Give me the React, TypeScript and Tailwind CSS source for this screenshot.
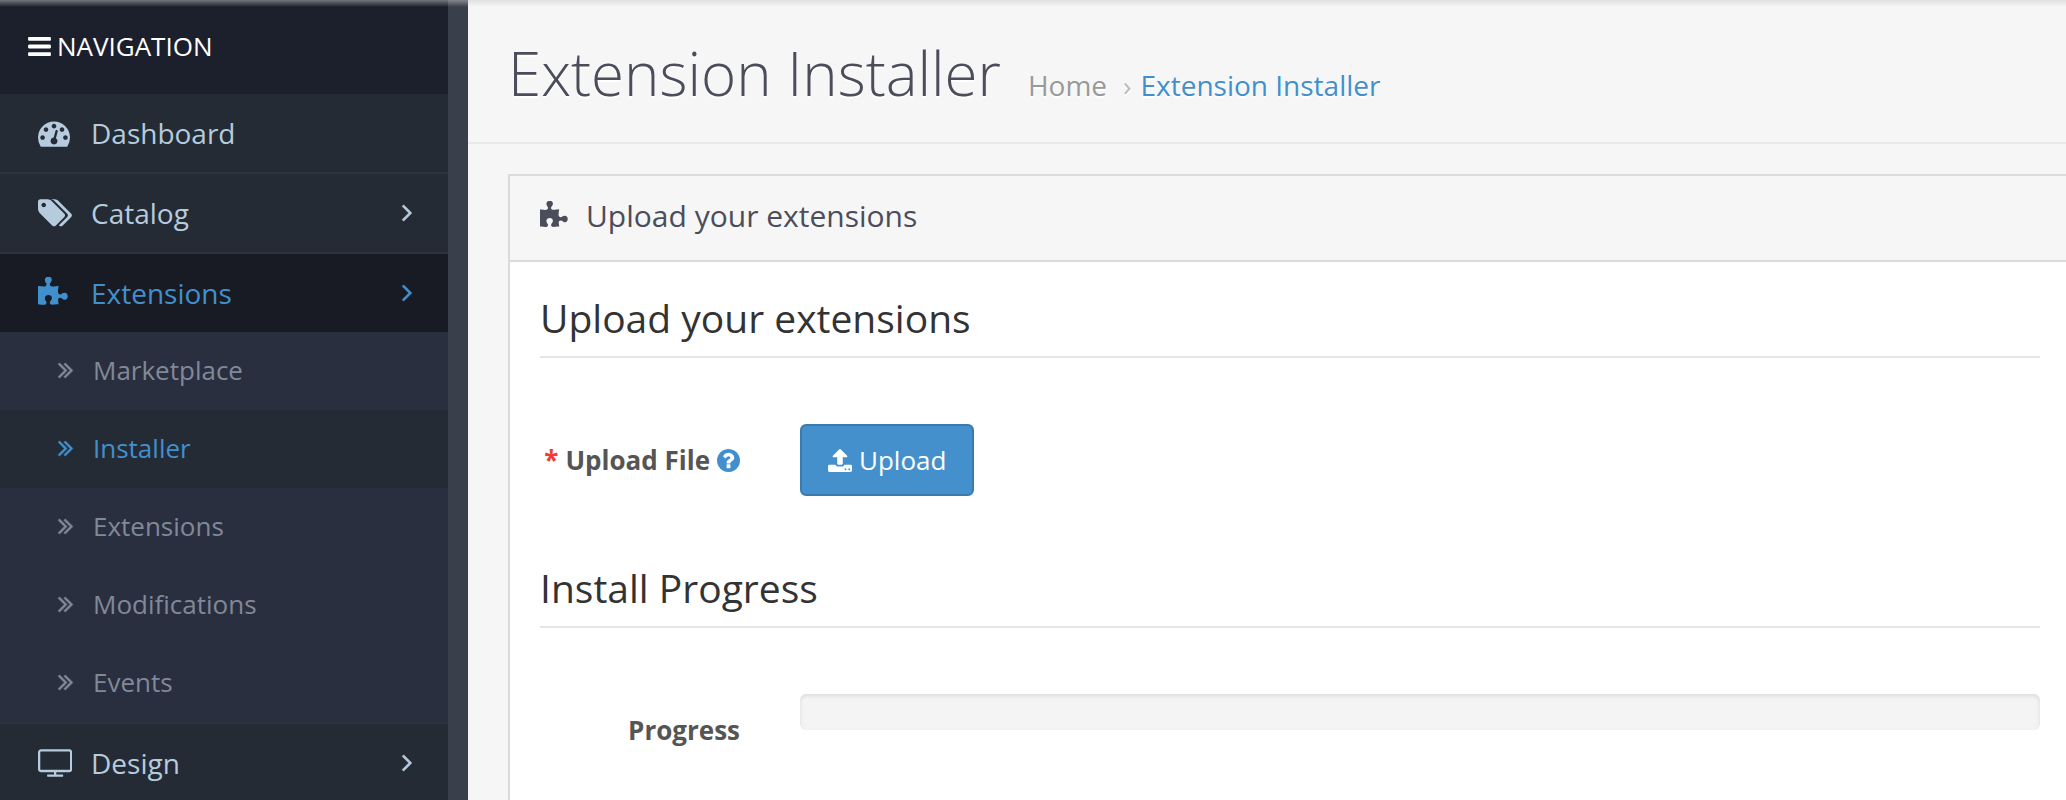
import React from "react";

type Glyph = { box: string; d: string };

const glyphs = {
  bars: {
    box: "128 256 1536 1280",
    d: "M1664 1344v128q0 26-19 45t-45 19h-1408q-26 0-45-19t-19-45v-128q0-26 19-45t45-19h1408q26 0 45 19t19 45zm0-512v128q0 26-19 45t-45 19h-1408q-26 0-45-19t-19-45v-128q0-26 19-45t45-19h1408q26 0 45 19t19 45zm0-512v128q0 26-19 45t-45 19h-1408q-26 0-45-19t-19-45v-128q0-26 19-45t45-19h1408q26 0 45 19t19 45z",
  },
  dashboard: {
    box: "0 0 1792 1792",
    d: "M384 1152q0-53-37.5-90.5t-90.5-37.5-90.5 37.5-37.5 90.5 37.5 90.5 90.5 37.5 90.5-37.5 37.5-90.5zm192-448q0-53-37.5-90.5t-90.5-37.5-90.5 37.5-37.5 90.5 37.5 90.5 90.5 37.5 90.5-37.5 37.5-90.5zm428 481l101-382q6-26-7.5-48.5t-38.5-29.5-48 6.5-30 39.5l-101 382q-60 5-107 43.5t-63 98.5q-20 77 20 146t117 89 146-20 89-117q16-60-6-117t-72-91zm660-33q0-53-37.5-90.5t-90.5-37.5-90.5 37.5-37.5 90.5 37.5 90.5 90.5 37.5 90.5-37.5 37.5-90.5zm-640-640q0-53-37.5-90.5t-90.5-37.5-90.5 37.5-37.5 90.5 37.5 90.5 90.5 37.5 90.5-37.5 37.5-90.5zm448 192q0-53-37.5-90.5t-90.5-37.5-90.5 37.5-37.5 90.5 37.5 90.5 90.5 37.5 90.5-37.5 37.5-90.5zm320 448q0 261-141 483-19 29-54 29h-1402q-35 0-54-29-141-221-141-483 0-182 71-348t191-286 286-191 348-71 348 71 286 191 191 286 71 348z",
  },
  tags: {
    box: "0 0 1904 1792",
    d: "M448 448q0-53-37.5-90.5t-90.5-37.5-90.5 37.5-37.5 90.5 37.5 90.5 90.5 37.5 90.5-37.5 37.5-90.5zm1067 576q0 53-37 90l-491 492q-39 37-91 37-53 0-90-37l-715-716q-38-37-64.5-101t-26.5-117v-416q0-52 38-90t90-38h416q53 0 117 26.5t102 64.5l715 714q37 39 37 91zm384 0q0 53-37 90l-491 492q-39 37-91 37-36 0-59-14t-53-45l470-470q37-37 37-90 0-52-37-91l-715-714q-38-38-102-64.5t-117-26.5h224q53 0 117 26.5t102 64.5l715 714q37 39 37 91z",
  },
  puzzle: {
    box: "91 0 1680 1792",
    d: "M1755 1083q0 81-44.5 135t-123.5 54q-41 0-77.5-17.5t-59-38-56.5-38-71-17.5q-110 0-110 124 0 39 16 115t15 115v5q-22 0-33 1-34 3-97.5 11.5t-115.5 13.5-98 5q-61 0-103-26.5t-42-83.5q0-37 17.5-71t38-56.5 38-59 17.5-77.5q0-79-54-123.5t-135-44.5q-84 0-143 45.5t-59 127.5q0 43 15 83t33.5 64.5 33.5 53 15 50.5q0 45-46 89-37 35-117 35-95 0-245-24-9-2-27.5-4t-27.5-4l-13-2q-1 0-3-1-2 0-2-1v-1024q2 1 17.5 3.5t34 5 21.5 3.5q150 24 245 24 80 0 117-35 46-44 46-89 0-22-15-50.5t-33.5-53-33.5-64.5-15-83q0-82 59-127.5t144-45.5q80 0 134 44.5t54 123.5q0 41-17.5 77.5t-38 59-38 56.5-17.5 71q0 57 42 83.5t103 26.5q64 0 180-15t163-17v2q-1 2-3.5 17.5t-5 34-3.5 21.5q-24 150-24 245 0 80 35 117 44 46 89 46 22 0 50.5-15t53-33.5 64.5-33.5 83-15q82 0 127.5 59t45.5 143z",
  },
  television: {
    box: "0 0 1904 1792",
    d: "M1792 1248v-960q0-13-9.5-22.5t-22.5-9.5h-1600q-13 0-22.5 9.5t-9.5 22.5v960q0 13 9.5 22.5t22.5 9.5h1600q13 0 22.5-9.5t9.5-22.5zm128-960v960q0 66-47 113t-113 47h-736v128h352q14 0 23 9t9 23v64q0 14-9 23t-23 9h-832q-14 0-23-9t-9-23v-64q0-14 9-23t23-9h352v-128h-736q-66 0-113-47t-47-113v-960q0-66 47-113t113-47h1600q66 0 113 47t47 113z",
  },
  angle: {
    box: "589 461 582 998",
    d: "M1171 960q0 13-10 23l-466 466q-10 10-23 10t-23-10l-50-50q-10-10-10-23t10-23l393-393-393-393q-10-10-10-23t10-23l50-50q10-10 23-10t23 10l466 466q10 10 10 23z",
  },
  doubleAngle: {
    box: "397 461 966 998",
    d: "M979 960q0 13-10 23l-466 466q-10 10-23 10t-23-10l-50-50q-10-10-10-23t10-23l393-393-393-393q-10-10-10-23t10-23l50-50q10-10 23-10t23 10l466 466q10 10 10 23zm384 0q0 13-10 23l-466 466q-10 10-23 10t-23-10l-50-50q-10-10-10-23t10-23l393-393-393-393q-10-10-10-23t10-23l50-50q10-10 23-10t23 10l466 466q10 10 10 23z",
  },
  upload: {
    box: "64 64 1664 1600",
    d: "M1344 1472q0-26-19-45t-45-19-45 19-19 45 19 45 45 19 45-19 19-45zm256 0q0-26-19-45t-45-19-45 19-19 45 19 45 45 19 45-19 19-45zm128-224v320q0 40-28 68t-68 28h-1472q-40 0-68-28t-28-68v-320q0-40 28-68t68-28h427q21 56 70.5 92t110.5 36h256q61 0 110.5-36t70.5-92h427q40 0 68 28t28 68zm-325-648q-17 40-59 40h-256v448q0 26-19 45t-45 19h-256q-26 0-45-19t-19-45v-448h-256q-42 0-59-40-17-39 14-69l448-448q18-19 45-19t45 19l448 448q31 30 14 69z",
  },
  question: {
    box: "128 128 1536 1536",
    d: "M1024 1376v-192q0-14-9-23t-23-9h-192q-14 0-23 9t-9 23v192q0 14 9 23t23 9h192q14 0 23-9t9-23zm256-672q0-88-55.5-163t-138.5-116-170-41q-243 0-371 213-15 24 8 42l132 100q7 6 19 6 16 0 25-12 53-68 86-92 34-24 86-24 48 0 85.5 26t37.5 59q0 38-20 61t-68 45q-63 28-115.5 86.5t-52.5 125.5v36q0 14 9 23t23 9h192q14 0 23-9t9-23q0-19 21.5-49.5t54.5-49.5q32-18 49-28.5t46-35 44.5-48 28-60.5 12.5-81zm384 192q0 209-103 385.5t-279.5 279.5-385.5 103-385.5-103-279.5-279.5-103-385.5 103-385.5 279.5-279.5 385.5-103 385.5 103 279.5 279.5 103 385.5z",
  },
} satisfies Record<string, Glyph>;

function Icon({ name, className }: { name: keyof typeof glyphs; className: string }) {
  const glyph = glyphs[name];
  return (
    <svg viewBox={glyph.box} className={`shrink-0 fill-current ${className}`} aria-hidden="true">
      <path d={glyph.d} />
    </svg>
  );
}

type NavItem = {
  label: string;
  icon: keyof typeof glyphs;
  iconSize: string;
  expandable?: boolean;
  active?: boolean;
  children?: { label: string; active?: boolean }[];
};

const navItems: NavItem[] = [
  { label: "Dashboard", icon: "dashboard", iconSize: "w-8 h-8" },
  { label: "Catalog", icon: "tags", iconSize: "w-[34px] h-8", expandable: true },
  {
    label: "Extensions",
    icon: "puzzle",
    iconSize: "w-[30px] h-8",
    expandable: true,
    active: true,
    children: [
      { label: "Marketplace" },
      { label: "Installer", active: true },
      { label: "Extensions" },
      { label: "Modifications" },
      { label: "Events" },
    ],
  },
  { label: "Design", icon: "television", iconSize: "w-[34px] h-8", expandable: true },
];

function Sidebar() {
  return (
    <nav aria-label="Navigation" className="w-[448px] shrink-0 bg-[#242b35]">
      <div className="flex items-center gap-[6px] bg-[#1b202c] px-7 pt-[27px] pb-[29px] text-[26px] leading-[38px] text-white">
        <Icon name="bars" className="h-[19px] w-[23px]" />
        <span>NAVIGATION</span>
      </div>
      <ul>
        {navItems.map((item) => (
          <li key={item.label} className="border-b-2 border-[#2b333f]">
            <a
              href="#"
              className={`flex items-center py-5 pr-9 pl-[38px] text-[28px] leading-[38px] ${
                item.active ? "bg-[#181b23] text-[#4190cd]" : "text-[#b6cbdd]"
              }`}
            >
              <span className="flex w-[53px] shrink-0">
                <Icon name={item.icon} className={item.iconSize} />
              </span>
              <span className="flex-1">{item.label}</span>
              {item.expandable && (
                <Icon
                  name="angle"
                  className="h-4 w-[10px] overflow-visible stroke-current stroke-[40px]"
                />
              )}
            </a>
            {item.children && (
              <ul className="bg-[#2a2f40]">
                {item.children.map((child) => (
                  <li key={child.label}>
                    <a
                      href="#"
                      className={`flex items-center gap-5 pt-[19px] pb-[21px] pl-[58px] text-[26px] leading-[38px] ${
                        child.active ? "bg-[#242b35] text-[#4190cd]" : "text-[#808998]"
                      }`}
                    >
                      <Icon
                        name="doubleAngle"
                        className="h-[15px] w-[15px] overflow-visible stroke-current stroke-[40px]"
                      />
                      {child.label}
                    </a>
                  </li>
                ))}
              </ul>
            )}
          </li>
        ))}
      </ul>
    </nav>
  );
}

function SectionTitle({ children }: { children: React.ReactNode }) {
  return (
    <h3 className="border-b-2 border-[#e5e5e5] pb-4 text-[39px] leading-[44px] text-[#333]">
      {children}
    </h3>
  );
}

const labelClass =
  "col-span-2 flex items-center justify-end gap-[7px] self-start px-[30px] pt-[18px] text-[26px] leading-9 font-bold whitespace-nowrap text-[#555]";

export default function App() {
  return (
    <div className="relative flex h-screen overflow-hidden bg-[#f6f6f6] font-['Open_Sans',sans-serif]">
      <Sidebar />
      <div className="w-5 shrink-0 bg-[#3a404b]" />
      <main className="min-w-0 flex-1">
        <header className="flex items-baseline gap-[27px] border-b-2 border-[#e8e8e8] pt-10 pb-9 pl-10 whitespace-nowrap [text-shadow:0_2px_#fff]">
          <h1 className="text-[60px] leading-[66px] font-light text-[#4c4d5a]">
            Extension Installer
          </h1>
          <nav aria-label="Breadcrumb">
            <ol className="flex items-baseline text-[28px] text-[#999]">
              <li>
                <a href="#">Home</a>
              </li>
              <li aria-hidden="true" className="pr-[9px] pl-4 text-[#bbb]">
                ›
              </li>
              <li>
                <a href="#" className="text-[#4190cd]">
                  Extension Installer
                </a>
              </li>
            </ol>
          </nav>
        </header>

        <section className="mt-[30px] -mr-[6px] ml-10 border-2 border-[#dbdbdb] bg-white">
          <div className="flex items-center gap-[18px] border-b-2 border-[#dbdbdb] bg-[#f6f6f6] px-[30px] pt-5 pb-6 text-[30px] leading-10 text-[#4c4d5a]">
            <Icon name="puzzle" className="h-[30px] w-7" />
            <h2>Upload your extensions</h2>
          </div>
          <div className="px-[30px] pt-[34px] pb-40">
            <SectionTitle>Upload your extensions</SectionTitle>
            <div className="-mx-[30px] mt-[66px] mb-[70px] grid grid-cols-12">
              <label htmlFor="button-upload" className={labelClass}>
                <span className="text-[#f23a2f]">*</span>
                Upload File
                <Icon name="question" className="h-[23px] w-[23px] text-[#4190cd]" />
              </label>
              <div className="col-span-10 px-[30px]">
                <button
                  id="button-upload"
                  type="button"
                  className="flex items-center gap-[7px] rounded-md border-2 border-[#3a7aad] bg-[#4490cc] px-[26px] py-4 text-[26px] leading-9 text-white"
                >
                  <Icon name="upload" className="h-[23px] w-6" />
                  Upload
                </button>
              </div>
            </div>
            <SectionTitle>Install Progress</SectionTitle>
            <div className="-mx-[30px] mt-[66px] grid grid-cols-12">
              <span id="progress-label" className={labelClass}>
                Progress
              </span>
              <div className="col-span-10 px-[30px]">
                <div
                  role="progressbar"
                  aria-labelledby="progress-label"
                  aria-valuenow={0}
                  className="h-9 rounded-md bg-[#f4f4f4] shadow-[inset_0_2px_4px_rgba(0,0,0,0.1)]"
                />
              </div>
            </div>
          </div>
        </section>
      </main>
      <div className="pointer-events-none absolute inset-x-0 top-0 h-[7px] bg-linear-to-b from-[#cccccc80] to-[#cccccc00]" />
    </div>
  );
}
